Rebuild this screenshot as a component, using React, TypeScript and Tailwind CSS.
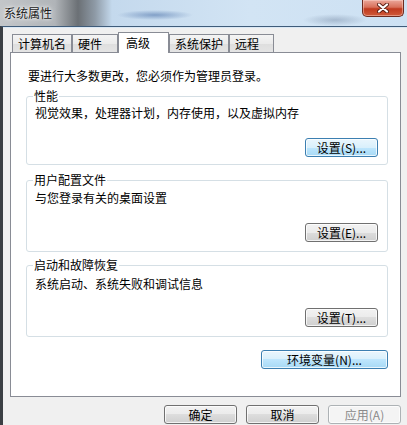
import type { ReactNode } from "react";

type BtnKind = "normal" | "focus" | "disabled";

function WinButton({ kind = "normal", className = "", children }: { kind?: BtnKind; className?: string; children: ReactNode }) {
  const skin =
    kind === "focus"
      ? "border-[#3c7fb1] bg-[linear-gradient(180deg,#eaf6fd_0%,#d9f0fc_50%,#bee6fd_50%,#a7d9f5_100%)] text-black"
      : kind === "disabled"
        ? "border-[#adb2b5] bg-[#f4f4f4] text-[#8a8a8a]"
        : "border-[#707070] bg-[linear-gradient(180deg,#f2f2f2_0%,#ebebeb_50%,#dddddd_50%,#cfcfcf_100%)] text-black";
  return (
    <div
      className={`flex h-[19px] items-center justify-center rounded-[3px] border shadow-[inset_0_0_0_1px_rgba(255,255,255,0.75)] leading-[16px] ${skin} ${className}`}
    >
      {children}
    </div>
  );
}

function Tab({ label, width, active = false }: { label: string; width: string; active?: boolean }) {
  if (active) {
    return (
      <div
        className={`relative z-10 -mb-px flex h-[21px] items-start border border-b-0 border-[#898c95] bg-white pl-[7px] pt-[1px] ${width}`}
      >
        {label}
      </div>
    );
  }
  return (
    <div
      className={`flex h-[18px] items-center border border-b-0 border-[#898c95] bg-[linear-gradient(180deg,#f4f4f4_0%,#ebebeb_50%,#dedede_51%,#e4e4e4_100%)] pl-[5px] ${width}`}
    >
      {label}
    </div>
  );
}

function Group({
  title,
  text,
  button,
  kind = "normal",
  className = "",
  textTop = "mt-[2px]",
  btnTop = "mt-[17px]",
  bottom = "pb-[8px]",
}: {
  title: string;
  text: string;
  button: string;
  kind?: BtnKind;
  className?: string;
  textTop?: string;
  btnTop?: string;
  bottom?: string;
}) {
  return (
    <fieldset className={`rounded-[3px] border border-[#d5dfe5] ${bottom} ${className}`}>
      <legend className="ml-[6px] px-[1px] leading-[16px]">{title}</legend>
      <div className={`pl-[8px] leading-[16px] ${textTop}`}>{text}</div>
      <div className={`flex justify-end pr-[9px] ${btnTop}`}>
        <WinButton kind={kind} className="w-[73px]">
          {button}
        </WinButton>
      </div>
    </fieldset>
  );
}

export default function App() {
  return (
    <div className="flex h-[425px] w-[407px] flex-col overflow-hidden bg-[#f0f0f0] font-['Noto_Sans_CJK_SC','Liberation_Sans',sans-serif] text-[12px] text-black">
      {/* aero title bar */}
      <div className="flex h-[26px] shrink-0 items-start bg-[radial-gradient(ellipse_38px_5px_at_155px_15px,rgba(60,100,160,0.5),transparent),radial-gradient(ellipse_32px_6px_at_335px_20px,rgba(90,110,140,0.35),transparent),linear-gradient(90deg,#c3c6c9_0px,#b0b4b8_55px,#6b7075_78px,#8e9aa6_95px,#c4d9ed_112px,#d2e4f4_250px,#cde1f3_407px)]">
        <span className="h-[26px] pl-[4px] leading-[26px] text-[#1a1a1a] [text-shadow:0_0_6px_#fff,0_0_3px_#fff]">系统属性</span>
        <div className="ml-auto mr-[3px] flex h-[17px] w-[42px] items-center justify-center rounded-b-[5px] border border-t-0 border-[#6d2b20] bg-[linear-gradient(180deg,#eba79a_0%,#d8705a_45%,#c03a1f_55%,#cf5a3a_100%)] shadow-[inset_0_0_0_1px_rgba(255,220,210,0.45)]">
          <svg width="12" height="10" viewBox="0 0 12 10">
            <path d="M2 1.5 L10 8.5 M10 1.5 L2 8.5" stroke="#5a1e14" strokeWidth="4" strokeLinecap="round" />
            <path d="M2 1.5 L10 8.5 M10 1.5 L2 8.5" stroke="#ffffff" strokeWidth="2.2" strokeLinecap="round" />
          </svg>
        </div>
      </div>

      {/* dialog body */}
      <div className="flex flex-1 flex-col border-l-[3px] border-t border-l-[#3b3f44] border-t-[#3f5c7a] pl-[7px] pr-[6px] pt-[5px] shadow-[inset_0_1px_0_#dbe8f4]">
        <div className="flex items-end pl-[2px]">
          <Tab label="计算机名" width="w-[60px]" />
          <Tab label="硬件" width="w-[46px]" />
          <Tab label="高级" width="w-[51px]" active />
          <Tab label="系统保护" width="w-[60px]" />
          <Tab label="远程" width="w-[45px]" />
        </div>

        <div className="flex h-[345px] flex-col border border-[#898c95] bg-white pl-[15px] pr-[12px] pt-[15px]">
          <p className="ml-[2px] leading-[16px]">要进行大多数更改，您必须作为管理员登录。</p>

          <Group
            title="性能"
            text="视觉效果，处理器计划，内存使用，以及虚拟内存"
            button="设置(S)..."
            kind="focus"
            className="mt-[4px]"
            textTop="mt-[1px]"
            bottom="pb-[7px]"
          />
          <Group
            title="用户配置文件"
            text="与您登录有关的桌面设置"
            button="设置(E)..."
            className="mt-[7px]"
            bottom="pb-[9px]"
          />
          <Group
            title="启动和故障恢复"
            text="系统启动、系统失败和调试信息"
            button="设置(T)..."
            className="mt-[5px]"
            textTop="mt-[3px]"
            btnTop="mt-[16px]"
            bottom="pb-[9px]"
          />

          <div className="mt-[13px] flex justify-end">
            <WinButton kind="focus" className="w-[127px]">
              环境变量(N)...
            </WinButton>
          </div>
        </div>

        <div className="mt-[8px] flex justify-end gap-[9px]">
          <WinButton className="w-[73px]">确定</WinButton>
          <WinButton className="w-[73px]">取消</WinButton>
          <WinButton kind="disabled" className="w-[73px]">
            应用(A)
          </WinButton>
        </div>
      </div>
    </div>
  );
}
